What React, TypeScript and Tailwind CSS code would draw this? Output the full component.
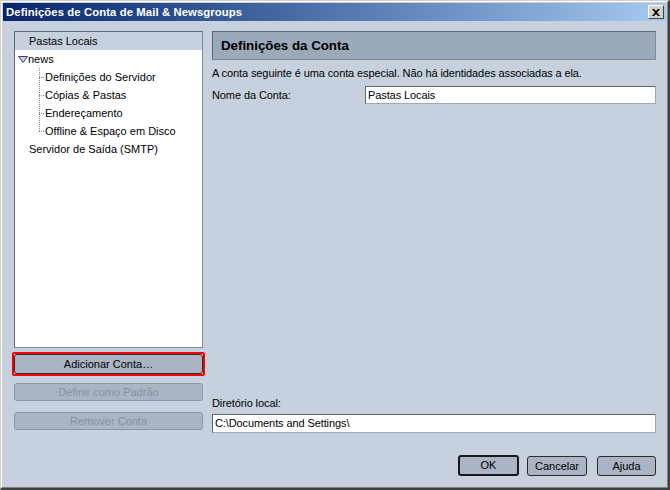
import React from 'react';

const font = { fontFamily: '"Liberation Sans", Arial, sans-serif' };

const TreeChild = ({ label, last }: { label: string; last?: boolean }) => (
  <div className="flex items-center h-[18px]">
    <svg width="6" height="18" className="ml-[24px] shrink-0">
      <line x1="0.5" y1="0" x2="0.5" y2={last ? 9 : 18} stroke="#8a8a8a" strokeDasharray="1 1" />
      <line x1="0" y1="9.5" x2="6" y2="9.5" stroke="#8a8a8a" strokeDasharray="1 1" />
    </svg>
    <span>{label}</span>
  </div>
);

const WinButton = ({
  children,
  disabled,
  focused,
  className = '',
}: {
  children: React.ReactNode;
  disabled?: boolean;
  focused?: boolean;
  className?: string;
}) => (
  <button
    className={
      'rounded-[3px] bg-[#aab4c4] text-[11px] leading-none ' +
      (disabled
        ? 'border border-[#8b97a8] text-[#8791a2] '
        : focused
        ? 'border-2 border-[#1a1a1a] text-black '
        : 'border border-[#2a2a2a] text-black ') +
      className
    }
  >
    {children}
  </button>
);

export default function App() {
  return (
    <div
      className="w-[670px] h-[490px] flex flex-col bg-[#c6d1dd] border-t border-l border-t-[#d4d0c8] border-l-[#d4d0c8] border-r-2 border-b-2 border-r-[#404040] border-b-[#404040] text-black select-none"
      style={font}
    >
      <div className="flex flex-col flex-1 border-t border-l border-white border-r border-b border-r-[#808080] border-b-[#808080] p-[1px]">
        {/* Title bar */}
        <div className="h-[18px] flex items-center justify-between bg-gradient-to-r from-[#0a246a] to-[#a6caf0] pl-[3px] pr-[2px]">
          <span className="text-white font-bold text-[11.3px] tracking-[0.1px]">
            Definições de Conta de Mail &amp; Newsgroups
          </span>
          <div className="w-[16px] h-[14px] bg-[#d4d0c8] border border-t-white border-l-white border-r-[#404040] border-b-[#404040] flex items-center justify-center">
            <svg width="8" height="7" viewBox="0 0 8 7">
              <path d="M0 0h2l2 2 2-2h2L5 3.5 8 7H6L4 5 2 7H0l3-3.5z" fill="#000" />
            </svg>
          </div>
        </div>

        {/* Body */}
        <div className="flex-1 flex flex-col pl-[11px] pr-[10px] pt-[10px]">
          <div className="flex gap-[9px]">
            {/* Left column */}
            <div className="w-[189px] flex flex-col pb-[3px]">
              <div className="h-[317px] bg-white border border-[#7f8a99] border-t-[#5d6673] border-l-[#5d6673] text-[11px]">
                <div className="h-[18px] bg-[#c6d1dd] flex items-center pl-[14px]">Pastas Locais</div>
                <div className="h-[18px] flex items-center pl-[3px]">
                  <svg width="10" height="7" viewBox="0 0 10 7">
                    <path d="M0.5 0.5h9L5 6.5z" fill="#c6d1dd" stroke="#3c4652" />
                  </svg>
                  <span>news</span>
                </div>
                <TreeChild label="Definições do Servidor" />
                <TreeChild label="Cópias & Pastas" />
                <TreeChild label="Endereçamento" />
                <TreeChild label="Offline & Espaço em Disco" last />
                <div className="h-[18px] flex items-center pl-[14px]">Servidor de Saída (SMTP)</div>
              </div>
              <div className="mt-[4px] -mx-[2px] border-2 border-[#ff0000] rounded-[2px]">
                <button className="w-full h-[20px] rounded-[3px] bg-[#aab4c4] border border-[#2a2a2a] text-[11px] leading-none block">
                  Adicionar Conta…
                </button>
              </div>
              <WinButton disabled className="mt-[7px] w-full h-[18px]">
                Definir como Padrão
              </WinButton>
              <WinButton disabled className="mt-[11px] w-full h-[18px]">
                Remover Conta
              </WinButton>
            </div>

            {/* Right column */}
            <div className="flex-1 flex flex-col text-[11px] tracking-[-0.1px]">
              <div className="h-[29px] bg-[#9ba9bb] border border-[#5d6673] border-r-[#7f8a99] border-b-[#7f8a99] flex items-center pl-[8px] font-bold text-[13.3px] tracking-normal">
                Definições da Conta
              </div>
              <div className="mt-[6px] h-[14px] leading-[14px]">
                A conta seguinte é uma conta especial. Não há identidades associadas a ela.
              </div>
              <div className="mt-[6px] flex items-center h-[18px]">
                <span className="w-[153px]">Nome da Conta:</span>
                <div className="flex-1 h-[18px] bg-white border border-[#5d6673] border-r-[#a0a8b4] border-b-[#a0a8b4] flex items-center pl-[2px]">
                  Pastas Locais
                </div>
              </div>
              <div className="flex-1" />
              <div className="h-[14px] leading-[14px] mb-[4px]">Diretório local:</div>
              <div className="h-[19px] bg-white border border-[#5d6673] border-r-[#a0a8b4] border-b-[#a0a8b4] flex items-center pl-[2px]">
                C:\Documents and Settings\
              </div>
            </div>
          </div>

          {/* Dialog buttons */}
          <div className="flex justify-end mt-[22px]">
            <WinButton focused className="w-[61px] h-[21px]">OK</WinButton>
            <WinButton className="w-[60px] h-[20px] ml-[8px] mt-[1px]">Cancelar</WinButton>
            <WinButton className="w-[59px] h-[20px] ml-[10px] mt-[1px]">Ajuda</WinButton>
          </div>
        </div>
      </div>
    </div>
  );
}
